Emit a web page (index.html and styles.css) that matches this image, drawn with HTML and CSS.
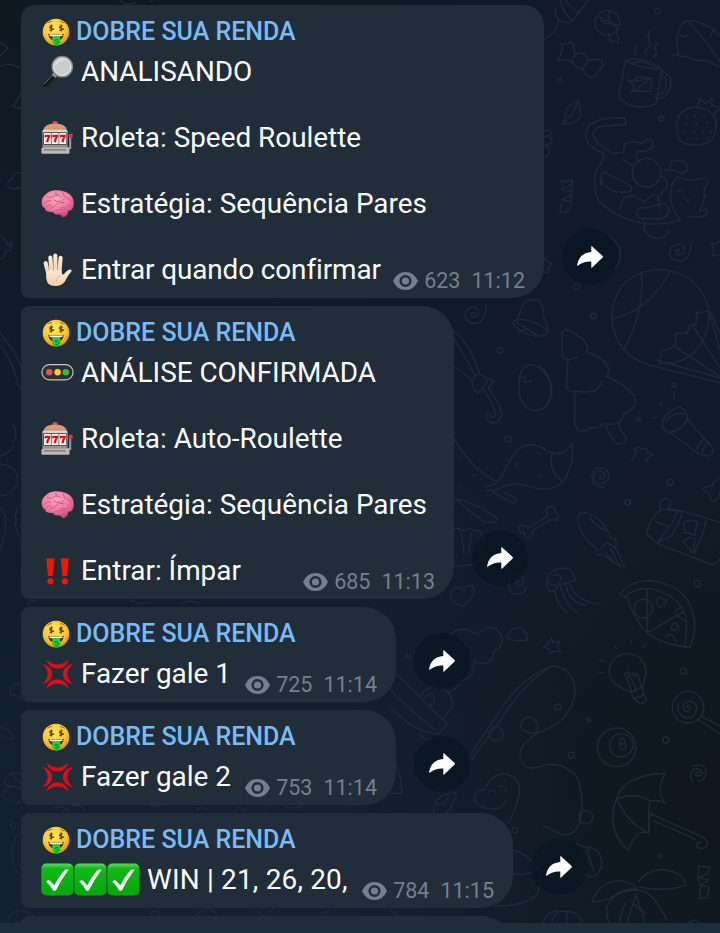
FILE: index.html
```html
<!DOCTYPE html>
<html lang="pt-BR">
<head>
<meta charset="utf-8">
<title>DOBRE SUA RENDA</title>
<link rel="stylesheet" href="styles.css">
</head>
<body>
<svg class="defs" width="0" height="0" aria-hidden="true">
  <defs>
    <radialGradient id="gFace" cx=".45" cy=".35" r=".65"><stop offset="0" stop-color="#ffe95c"/><stop offset=".65" stop-color="#fdc82e"/><stop offset="1" stop-color="#e8930f"/></radialGradient>
    <linearGradient id="gCheck" x2="0" y2="1"><stop offset="0" stop-color="#5be05b"/><stop offset=".16" stop-color="#12b81a"/><stop offset="1" stop-color="#02a808"/></linearGradient>
    <linearGradient id="gMetal" x2="0" y2="1"><stop offset="0" stop-color="#dcdcd6"/><stop offset="1" stop-color="#8c8b87"/></linearGradient>
    <linearGradient id="gDome" x2="0" y2="1"><stop offset="0" stop-color="#e8946a"/><stop offset=".6" stop-color="#dc9a72"/><stop offset="1" stop-color="#a86445"/></linearGradient>
    <radialGradient id="gBrain" cx=".45" cy=".3" r=".7"><stop offset="0" stop-color="#fba6c2"/><stop offset=".6" stop-color="#ee7ba0"/><stop offset="1" stop-color="#c9446f"/></radialGradient>
    <linearGradient id="gHand" x2="0" y2="1"><stop offset="0" stop-color="#fdeada"/><stop offset="1" stop-color="#f2cca4"/></linearGradient>
    <symbol id="money" viewBox="0 0 28 28">
      <circle cx="14" cy="14" r="13.3" fill="url(#gFace)"/>
      <path d="M6.3 15.700q7.700 1.800 15.400 0q-.6 7.300-7.700 7.300T6.300 15.700z" fill="#4b2410"/>
      <path d="M7.400 16.200q6.600 1.200 13.200 0l-.4 1.800q-6.200 1-12.400 0z" fill="#fff"/>
      <path d="M10.200 19q4-1.600 8 0l.4 5.600q-.5 3-4 3t-4.200-3z" fill="#23cf3a"/>
      <path d="M16 21.600q-3-1-3 .5t2.600 1.200 0 2.200l-2.800-.2" fill="none" stroke="#0c7d20" stroke-width=".9"/>
      <g fill="none" stroke="#614016" stroke-width="1.200"><path d="M11 8.300q-3.200-1-3.200.7T10.800 10.800t-3.200 1.500M9.400 6.600v7M20.800 8.300q-3.200-1-3.200.7t3 1.800-3.200 1.500M19.200 6.600v7"/></g>
      <path d="M5.500 5.200q2-2 4.500-1.600M18 3.700q3-.2 4.600 1.900" fill="none" stroke="#a86a12" stroke-width="1"/>
    </symbol>
    <symbol id="lens" viewBox="0 0 33 33">
      <path d="M1.500 29.500L12 18.500l3.600 3.400L5 32q-1.500.9-2.900-.4t-.6-2.100z" fill="#17191b"/>
      <path d="M2.500 29.500L12 19.700" stroke="#6a7076" stroke-width="1"/>
      <path d="M10.700 19.800l3-3.200 3.400 3.300-3 3.200z" fill="#8d9295"/>
      <circle cx="21.300" cy="11.700" r="10.200" fill="#bfc3c6" stroke="#80868a" stroke-width="1.400"/>
      <circle cx="21.300" cy="11.700" r="8.600" fill="#c9cbcd" stroke="#eceeef" stroke-width="1"/>
      <path d="M15 10q2-5 7-4.500" fill="none" stroke="#e4e6e7" stroke-width="1.600"/>
    </symbol>
    <symbol id="slot" viewBox="0 0 33 33">
      <rect x="11.600" y="0" width="5" height="4" rx="1.500" fill="#d2484a"/>
      <path d="M2.500 10q0-7.500 11.600-7.500T25.800 10z" fill="url(#gDome)"/>
      <path d="M26 26h2.200V15.500h2V28H26z" fill="#9b9d9e"/>
      <circle cx="29.700" cy="14.700" r="2.300" fill="#cf3647"/>
      <rect x="1.500" y="8.500" width="25" height="18.500" rx="1.500" fill="url(#gMetal)"/>
      <rect x="2" y="11.300" width="24" height="12.400" rx="1" fill="#3d3936"/>
      <path d="M2.900 12h7v11h-7zM10.600 12h7v11h-7zM18.300 12h7v11h-7z" fill="#fafaf8"/>
      <path d="M3.600 13.800h5.800v1.900q-2 2.300-2 5.500H4.900q.1-2.900 2-5.100H4.700l-.2.700h-.9zM11.300 13.800h5.800v1.900q-2 2.300-2 5.500h-2.500q.1-2.900 2-5.100h-2.200l-.2.700h-.9zM19 13.800h5.800v1.900q-2 2.300-2 5.500h-2.500q.1-2.900 2-5.100h-2.200l-.2.700H19z" fill="#d41418"/>
      <path d="M1.500 26.500h25.500l1.500 1v4.300q0 .9-1 .9H1.300q-.9 0-.9-.9v-3.800z" fill="#b9b9b5"/>
      <path d="M3 28.200h22v1.300H3z" fill="#777671"/>
    </symbol>
    <symbol id="brain" viewBox="0 0 33 33">
      <path d="M1 18Q-.5 12 4 8q4-4.500 10-4.800T25 5q6 2.300 7.500 8.500 1 6-1.500 9-2 1.500-3.700 1.200-.3 4.800-4.300 6.400-2 .4-3.800-2.600Q13 28 12 25q-8 .7-8-3.700Q1.500 21 1 18z" fill="url(#gBrain)"/>
      <path d="M3 17q3-4 7-3.500M6 9q3 3 7 0t7 1M9 21q5-1 7-4t7-1M15 5q-1 3 2 4M22 6q0 4 4 5t4 4M13 13q3 3 6 1M23 12q-3 1-2 4M12 25q6-4 13-2M5 20q2-3 5-2M27 17q1 3-3 4M19 21q3-2 5 0M20 26q4 1 6-1" fill="none" stroke="#cc5680" stroke-width=".9" stroke-linecap="round"/>
    </symbol>
    <symbol id="hand" viewBox="0 0 33 33">
      <g fill="none" stroke="url(#gHand)" stroke-width="4.100" stroke-linecap="round">
        <path d="M4.700 10.200L7.600 22"/><path d="M9.300 4.500L10.700 20"/><path d="M14.300 2.600L14.600 20"/><path d="M19.600 4.900L18.400 20"/>
      </g>
      <path d="M5.500 20L8 16.500h12.400L20.700 20q.3 2 2 1.200l3-3q2.200-2.200 4.300-1.400 1.300.7.200 1.900Q27 22 25 26.500 22.500 32.800 15 33 9.500 33 7 30.500 4.500 26 5.500 20z" fill="url(#gHand)"/>
      <path d="M7.600 14.500l.8 4M12.400 14v4M16.600 14v4M19.500 22.500q-4 2-4.500 6" fill="none" stroke="#d9ac82" stroke-width=".7"/>
    </symbol>
    <symbol id="light" viewBox="0 0 33 33">
      <rect x=".9" y="8.700" width="31.200" height="15.200" rx="7.600" fill="#302e2f" stroke="#c2c5c5" stroke-width="1.200"/>
      <circle cx="8.300" cy="16.300" r="3.200" fill="#e8505a"/><circle cx="16.600" cy="16.300" r="3.200" fill="#f6cf1f"/><circle cx="24.800" cy="16.300" r="3.200" fill="#25c43f"/>
    </symbol>
    <symbol id="bang" viewBox="0 0 33 33">
      <path d="M5.300 4.600h8.200L11.700 22H7zM19.600 4.600h8.200L26.200 22h-4.700z" fill="#f31607"/>
      <circle cx="9.400" cy="27.300" r="3.100" fill="#f31607"/><circle cx="23.800" cy="27.300" r="3.100" fill="#f31607"/>
    </symbol>
    <symbol id="anger" viewBox="0 0 33 33">
      <path d="M6.200 3.500Q11 8 16.500 8T27 3.500q-2.500 7.700-10.500 7.700T6.200 3.500zM6.200 30.500Q11 26 16.500 26T27 30.500q-2.500-7.700-10.500-7.700T6.200 30.500zM2.500 7.500Q10.800 10 10.800 17T2.500 26.500Q7.300 22 7.300 17T2.500 7.500zM30.700 7.500Q22.300 10 22.300 17t8.400 9.500Q25.800 22 25.800 17t4.900-9.500z" fill="#e00c18" stroke="#e00c18" stroke-width=".8" stroke-linejoin="round"/>
    </symbol>
    <symbol id="check" viewBox="0 0 33 33">
      <rect x=".3" y=".5" width="32.200" height="32" rx="5" fill="url(#gCheck)"/>
      <path d="M5.300 18.800q1.700-2.400 4-.8l4 4.600Q18 13 24.300 6.600l3.500-.2Q20 16.500 15 27.200q-1.500 1-3 0-3-5.500-6.700-8.400z" fill="#fff"/>
    </symbol>
    <symbol id="eye" viewBox="0 0 25 18">
      <path fill-rule="evenodd" d="M12.500 0Q21 0 25 9q-4 9-12.500 9T0 9q4-9 12.500-9zM12.500 2.900a6.100 6.100 0 1 0 0 12.200a6.100 6.100 0 1 0 0-12.200zM12.500 5.400a3.600 3.600 0 1 1 0 7.200a3.600 3.600 0 1 1 0-7.200z" fill="currentColor"/>
    </symbol>
    <symbol id="share" viewBox="0 0 26 22">
      <path d="M14.300.7q.1-1 .9-.3L25.600 10q.8.800 0 1.600L15.200 21.500q-.8.600-.9-.3V15.500Q7.500 14.800 1 19.600q-1 .6-.9-.6Q2.200 7 14.300 6z" fill="#fff"/>
    </symbol>
  </defs>
</svg>

<svg class="wallpaper" viewBox="0 0 720 933" aria-hidden="true">
  <g transform="translate(540 0) scale(.3333)">
    <path d="M12 118Q45 102 56 64M48 28Q40 50 62 64q18 8 35 0Q122 30 145 0M62 2q2 28 35 62M78 0q10 25 42 38"/>
    <circle cx="202" cy="68" r="37"/><path d="M175 50q26 10 60 38M210 32q-20 30 25 44M206 102l5 26 10-8 12 8 3-20-8-10M184 62q10 15 26 4"/>
    <path d="M102 163q4-26-7-38l-18 8-13-3q8 25-12 50 26-2 48 6M122 208q-30-15-25-28 8-25 30-20 20 8 14 24-4 20-19 24zM142 182q20-7 43-2 9 20-9 30-4 22-22 24-20-6-24-26"/>
    <circle cx="352" cy="33" r="8"/><circle cx="60" cy="242" r="7"/><circle cx="365" cy="356" r="7"/>
    <path d="M256 182L236 292q40 45 112 20l18-104M256 182q55-18 110 26-60 0-110-26M280 188q30-10 68 14M366 214q32 10 25 46-10 36-41 36M368 226q16 8 10 38-8 20-24 20M260 240l22 4 10-14 44 4-6 40-56 0 10-16zM282 244l50-10-46 36M288 166q-8-8 0-28M318 162q-10-8 8-18 10-8 0-24-6-14 6-28M342 170q14-6 4-20-4-12 10-24"/>
    <path d="M400 168l16-6q-16-60 16-96 18-10 42 0 36 10 66 40M416 168q30 0 50 14l34 0 40 18M440 60q50 50 100 124M420 104q12 12 24 0M510 110l8-16"/>
    <path d="M66 374q10-10 10-36 8-28 40-30 16 50-18 60-14 2-32 6M76 364q28-22 40-68"/>
    <path d="M12 392q26-6 18 14-16 4-18 4 32-4 20 20l-20 8q20-6 14 28l-10 6"/>
    <path d="M64 542q14 4 34-2 2 16-34 28 10 8 32 2 2 20-32 30 10 6 30 2l-2 22-12 12-20 0 2-24M64 542l4 20M98 540l-2 24M96 570l-2 28"/>
    <path d="M418 346q25-34 72-20 46 16 38 60-4 36-32 44-50 14-76-8-18-36-2-76zM474 322l4-26 20 14 18-16 0 22 26 6-20 20"/>
    <path d="M440 350l6 4M460 344l6 6M490 350l6-4M436 374l6-4M466 368l6 6M500 370l6-4M432 396l6 4M460 398l6-4M486 390l6 4M510 398l6-4M440 420l6-4M470 416l6 4M500 416l4-6"/>
    <path d="M250 376q14-10 2-22-70-4-98 18-28 24-8 60 14 16 46 28 4 20-20 44-18 50 2 94 50 60 150 74 60 2 100-14M250 376q-50-2-76 6-26 14-4 44 30 24 48 34l32-2 4-26q24-10 52-2l16-12q20 0 18 20-14 20-48 16l-2 22 12 14M246 478l30 18M184 558q-6-28 6-44l56 30q30 6 28 30-30 6-48 0-20-5-46-32M242 626q0-40 40-38l30 18 24-18q12-10 20 10l4 30M300 624q-14 10-4 30l56 4q36-6 34-28-4-20-24-18l-44 12zM362 528q26 8 18 36-26 20-28 40M396 554q-16 60 26 106M396 554l14-22 40 10 44-8 10 12-12 22 2 20-14 46 18-8q8 12-2 22-24 4-54 4M370 510l32 0q30 20 42-4-2-26-30-24-30 0-24 24M310 660l4 30M408 572q14 4 18-6M450 600q-8 4-16-4"/>
    <circle cx="320" cy="518" r="43"/>
  </g>
  <g transform="translate(540 230) scale(.3333)">
    <path d="M205 18q46 26 34 70-8 30-28 38M312 0q20 30 50 24 20-8 28-24M420 66q-4-12-12-4 0 16 16 12 14-10 6-26-16-12-34 2-14 20-2 36 24 14 44 0 20-20 12-52M540 34l-12 8-14 0 8 16-4 20 22-4"/>
    <path d="M345 410Q214 380 216 250 230 124 362 118q120 10 148 130"/><path d="M304 126q10 120-52 232M214 266q110-20 176-142M502 244l-32 4-2 34-20 4-6 24-34 0-2 36-26 14-16 2-4 40 46-4q100-30 102-156M322 404l218 54M350 390l190 54M400 346l140 94M456 284l84 130M508 248l32 110M516 252l24 60"/>
    <path d="M66 308q10-16 30-2l32 20q20 20 12 40 60 20 66 52 0 20-10 20 70 30 88 64 8 36-32 48-4 18-16 30-28 6-46 0-10 16-40 14-14 14-34 8-12-10-12-40l0-76q-20 0-24-16l4-80q-20-4-18-22zM114 380q-16 10-32 8M188 454q-10 24-32 30-22 4-50 0M196 586q10 30 36 56 24 2 28-18-20-20-24-46"/>
    <circle cx="110" cy="171" r="8"/><circle cx="160" cy="258" r="8"/><circle cx="402" cy="466" r="6"/><circle cx="296" cy="567" r="6"/>
    <path d="M368 578q4-30 50-48 20 10 26 32-20 40-56 46-20-6-20-30zM378 574q20-30 56-20M388 606l90 66q20 10 34 4 10-10 6-22l-76-86M470 658q6-20 26-34M486 668q4-20 20-30M400 486l4 20M358 518l10 8M336 562l14 4M276 690l14-24-10-10 18-4 8 6 14-4 2 14 16 6-16 10-2 10"/>
    <path d="M12 90l6-8 6 14 12 4-10 14 0 14-14-2M0 410q36 30 36 75-8 48-36 54"/>
  </g>
  <g transform="translate(440 300) scale(.3333)">
    <path d="M104 42q-8-10-10 0 0 12 14 8 14-10 4-24-16-12-32 4-10 20 4 34 24 14 42-2 16-20 10-48M218 70q22-18 28-50 14-28 52-18 14 24 14 54 14 16 10 44-10 10-34 8-50-8-70-38zM222 62q40-14 98 26M230 68l60 36M236 94q30-14 48 10"/>
    <path d="M40 92q50 36 78 128l-26 20M40 116q34 50 66 112M118 222l20 14 26 8-20 16q34 50 42 82-6 30-34 26-20-10-14-26 16-2 16 8 14 6 12-14-16-42-36-68M94 240l10 32 10 6 12-8 14-26M40 200q30 14 52 40"/>
    <path d="M244 212q20-26 50-12 40 30 40 74-6 56-50 58-40-4-48-60 0-40 8-60zM238 232l20 0M250 240l6 8 20-6"/>
    <circle cx="181" cy="151" r="9"/><circle cx="205" cy="418" r="9"/><circle cx="461" cy="47" r="8"/><circle cx="562" cy="607" r="8"/>
    <path d="M40 412q50 90 126 132M136 558q30 0 44-20 30-60 46-80 40-46 100-2 50 16 70-26 10 70-32 120-40 30-94 10-50-20-100 10l-34 2M336 460q-12 50 28 82M155 572q40 30 70 38 10-14-12-24l-20-8M46 596q70 16 126 60-2 18-40 8-44-28-84-66M98 526l8 0M54 474l6 0M54 560l10-4M234 488q-10 10 2 14M296 458l6 4M294 530l4-4M196 556l4-4"/>
    <path d="M266 684l56-36q-10-26 10-30 16 0 12 16 18 14 8 26l-22 0-52 32q2 24-14 24-14-6-10-16-20-2-18-18 14-10 30 2zM414 660q0-30 30-20 50 20 68 74l12 0 6 18-6 8 30 60-14 0-56-38-10 4-4-20q-50-36-56-86zM450 654q20 26 46 36M480 748l20-20 24 14M510 744l30 54M494 756l34 36"/>
    <path d="M40 690q14-10 30 2 20-12 32 0 24-4 24 14 14 10 0 30l-18 56-66 8M64 700l8 60M94 700l-8 60M120 710l-18 54M32 884q4-26 32-20l8 8q6-20 26-14 18 24-30 62-34-12-36-36z"/>
    <path d="M240 846q-12-10-14 4 4 14 20 6 12-20-6-32-22-10-34 16-4 30 14 42 36 6 38-20"/>
    <path d="M326 868q-14-28 6-50 36-28 66 0l8 22-28 10q-30 6-38 26zM340 826q28-8 20 20-20 16-32 4M346 872q0 40 36 66M362 862q10 46 50 76M378 856q10 50 60 60M388 852q20 50 86 60"/>
  </g>
  <g transform="translate(560 460) scale(.3333)">
    <path d="M124 48q-10 0-6 8 16 4 16-10-4-16-24-12-16 20 0 34 24 8 36-14 4-28-28-32-24 6-22 36 6 24 38 24"/>
    <path d="M260 222q10-50 44-74l64 6 112 32M260 222l30 28 160 62q20 4 30-16M290 250q20-14 42-20 28-40 36-76M290 250l50-68 14-32M286 184l38 16M302 150l-4-20q10-22 32-10 6 16-8 26M330 146l30 6M372 186q20-10 40 0l-8 40-30-10zM370 246q20-24 34-6l-4 40zM438 182l-8 36-28 60M480 52q-20 10-24 26-30 0-24 14 14 0 24 30 20 6 24-28"/>
    <path d="M180 404q30-44 94-42 120 14 130 128 0 40-14 72-80-6-130-44-40-44-58-104zM194 412q30-30 76-26 100 20 110 100l-4 70M262 388l0 130 110-64M290 420q10-16 20 0l12 0q-2 14-22 22-10-6-10-22zM334 498l10-10 12 10q-8 20-20 12zM316 530q20-16 32 14M368 442q-28 4-18 26l24 14"/>
    <circle cx="250" cy="446" r="28"/><circle cx="330" cy="67" r="9"/><circle cx="204" cy="127" r="8"/><circle cx="410" cy="371" r="9"/>
  </g>
  <g transform="translate(390 600) scale(.3333)">
    <path d="M180 106q30-36 82-2 40-44 72 0 10 36-22 50-4 40-40 36-14 0-20-8 4 60-46 60 4 20-30 34M352 110q10-30 40-26 20 10 20 36-30 6-60-4zM484 114l6 14 20-4-8 16 10 14-20 0-10 8-6-16-16-6 14-8z"/>
    <path d="M240 466l78-116Q390 230 490 198q70 10 64 88-14 76-98 108-50 14-64-14 0-28 30-28 32 16 18 48-54 36-50 70 10 46 60 30 60-24 110 30 20 40 14 110-10 80-68 60-20-14-46-22M248 474l84-114q60-100 150-160M240 466q-4 10 8 12M568 638q20-14 38 4 8 28-20 30-20-4-18-34z"/>
    <circle cx="318" cy="402" r="21"/><circle cx="504" cy="321" r="9"/><circle cx="544" cy="466" r="9"/><circle cx="828" cy="420" r="9"/><circle cx="880" cy="214" r="9"/><circle cx="374" cy="690" r="8"/><circle cx="596" cy="359" r="6"/><circle cx="810" cy="767" r="6"/><circle cx="55" cy="168" r="7"/>
    <path d="M724 276q-70-20-66-70 10-44 60-46 50 10 50 60-10 30-10 60 14 10 10 24l-18 8-22-20zM724 276l30-14M732 296l34-12M704 220l10-4 26 56M704 220l20 50M714 232l14-16 6 14 8-10 14 46M724 122l0 8M674 138l6 8M768 130l-8 12M630 180l12 4M626 218l14 0"/>
    <circle cx="894" cy="322" r="47"/><path d="M892 322q0-10 8-4 4 20-14 16-14-14 2-28 24-8 32 16-2 34-32 32-32-14-22-46M936 350l54 28M926 360l64 42"/>
    <circle cx="680" cy="442" r="58"/><circle cx="694" cy="436" r="35"/><circle cx="697" cy="424" r="8"/><circle cx="699" cy="440" r="9"/>
    <path d="M928 518q-10-4-12 6 12 10 22-4-8-20-26-12-18 20-4 36M908 500q30-14 40 10 4 26-22 34"/>
    <path d="M680 596q20-70 146-76-30 50 0 90-10-10-46-8l-4 36 0 60q-40-10-62 54-70-70-34-156zM680 596q60-20 100 6M680 596q30 70 96 104M776 654q20-20 6-12l158 70q20 14 8 30-20 8-30-4 0-14 14-10M786 660l130 58"/>
    <path d="M606 906q20-60 80-64 40 4 54 24-40 0-66 20-30 20-68 20zM746 844q30-40 80-34 60 10 60 46-60 20-136 6M740 870q-70 0-90 54 0 30 8 44M740 870q50 0 90 90M740 880l-30 88M740 890l24 78M726 910l40 30M686 968l20-60"/>
    <path d="M926 798l34 4-8 20-24 10 28 8-26 16 28 4-6 34-24 0 4-30-8-30z"/>
    <path d="M254 604q-4-36 30-34 20-50 60-48 50 10 44 60-10 50-34 88M254 604q30 34 80 18 10-10 12-20M296 576q14-14 20 0M326 560q20-6 24 16M130 640q0-60 68-62 0 30-30 62M136 610q20 14 40-20"/>
    <path d="M18 220q50 50 154 152l-26 30q-80-6-146-84M0 270q60 60 136 120M90 290q20-36 60-30 40 20 38 60l-26 36M108 290q20-20 26 6-2 20-18 20M92 402q10 24 44 16M0 580l36 0q0-40-20-90"/>
    <path d="M580 740q60 0 54 60-20 50-54 20M560 730l40 20M590 750l20 60M368 750q100 30 76 130-30 36-130 40M460 968q10-40 60-34 50 0 56 34M486 968q0-20 20-30M530 968l0-34M372 820q40 10 60-10M0 930l24 20M896 968q20-16 30 0"/>
  </g>
  <g class="fine">
    <path d="M0 42l8 6-8 8M0 66q10-4 21 2M21 94l-8 12 8 3M120 0q6 8 16 2M150 2l6-4M21 174q-8-4-8 4-8 4-4 10 6 2 12-1M0 236q6 2 8 10l4-4-1 8-5 1q-2 8-6 8M0 345q12 14 18 40l3 4M0 333q14 16 21 34M0 464q18 2 18 18-6 14-18 14M0 508q12 10 0 42M21 505q-6 2-4 7-4 4 0 8-4 6 0 9 0 6 4 8M13 424q6 10 0 18M0 456q8-2 14-10M21 684l-6 0q-6 4-5 11l6 0 5 5M0 727q10 2 14 10-2 6-14-2M21 774q-14-4-16 8 0 6 6 4-10 6-6 12 8 6 16 4M6 785l15 3M10 772l11 12M20 832q-10 10-8 24 2 14 9 20M8 922q0-14 20-10l10 8M50 810q10-8 20 2M62 812q16-12 24-2M150 805q8 4 16-2M196 812q4-8 12-2M234 812q4-10 12 0l0-6M266 812v-7M284 806q10 4 18 0M150 915q4-8 10 0M196 916q8-12 22-2M256 910l8 6 10-8M320 914l10-4M28 605q2-6 8-4M130 600q12 6 20 2M180 604q10-6 20 0"/>
    <circle cx="13" cy="826" r="2.500"/>
  </g>
</svg>

<main class="chat">
  <article class="row">
    <section class="bubble bubble--a">
      <h2 class="name"><svg class="face"><use href="#money"/></svg>DOBRE SUA RENDA</h2>
      <p class="line"><svg class="emoji"><use href="#lens"/></svg><span class="text">ANALISANDO</span></p>
      <p class="line"></p>
      <p class="line"><svg class="emoji"><use href="#slot"/></svg><span class="text">Roleta: Speed Roulette</span></p>
      <p class="line"></p>
      <p class="line"><svg class="emoji"><use href="#brain"/></svg><span class="text">Estratégia: Sequência Pares</span></p>
      <p class="line"></p>
      <div class="line"><svg class="emoji"><use href="#hand"/></svg><span class="text text--snug">Entrar quando confirmar</span><span class="meta"><svg class="eye"><use href="#eye"/></svg><span>623</span><time>11:12</time></span></div>
    </section>
    <button class="share" aria-label="Encaminhar"><svg><use href="#share"/></svg></button>
  </article>
  <article class="row">
    <section class="bubble bubble--b">
      <h2 class="name"><svg class="face"><use href="#money"/></svg>DOBRE SUA RENDA</h2>
      <p class="line"><svg class="emoji"><use href="#light"/></svg><span class="text">ANÁLISE CONFIRMADA</span></p>
      <p class="line"></p>
      <p class="line"><svg class="emoji"><use href="#slot"/></svg><span class="text">Roleta: Auto-Roulette</span></p>
      <p class="line"></p>
      <p class="line"><svg class="emoji"><use href="#brain"/></svg><span class="text">Estratégia: Sequência Pares</span></p>
      <p class="line"></p>
      <div class="line"><svg class="emoji"><use href="#bang"/></svg><span class="text">Entrar: Ímpar</span><span class="meta"><svg class="eye"><use href="#eye"/></svg><span>685</span><time>11:13</time></span></div>
    </section>
    <button class="share" aria-label="Encaminhar"><svg><use href="#share"/></svg></button>
  </article>
  <article class="row">
    <section class="bubble bubble--c">
      <h2 class="name"><svg class="face"><use href="#money"/></svg>DOBRE SUA RENDA</h2>
      <div class="line"><svg class="emoji"><use href="#anger"/></svg><span class="text">Fazer gale 1</span><span class="meta"><svg class="eye"><use href="#eye"/></svg><span>725</span><time>11:14</time></span></div>
    </section>
    <button class="share" aria-label="Encaminhar"><svg><use href="#share"/></svg></button>
  </article>
  <article class="row">
    <section class="bubble bubble--c">
      <h2 class="name"><svg class="face"><use href="#money"/></svg>DOBRE SUA RENDA</h2>
      <div class="line"><svg class="emoji"><use href="#anger"/></svg><span class="text">Fazer gale 2</span><span class="meta"><svg class="eye"><use href="#eye"/></svg><span>753</span><time>11:14</time></span></div>
    </section>
    <button class="share" aria-label="Encaminhar"><svg><use href="#share"/></svg></button>
  </article>
  <article class="row">
    <section class="bubble bubble--d">
      <h2 class="name"><svg class="face"><use href="#money"/></svg>DOBRE SUA RENDA</h2>
      <div class="line"><svg class="emoji"><use href="#check"/></svg><svg class="emoji"><use href="#check"/></svg><svg class="emoji"><use href="#check"/></svg><span class="text text--wide">WIN | 21, 26, 20,</span><span class="meta"><svg class="eye"><use href="#eye"/></svg><span>784</span><time>11:15</time></span></div>
    </section>
    <button class="share" aria-label="Encaminhar"><svg><use href="#share"/></svg></button>
  </article>
  <div class="bubble bubble--next"></div>
</main>
<footer class="bar"></footer>
</body>
</html>
```
FILE: styles.css
```css
* { box-sizing: border-box; }

body {
  margin: 0;
  width: 720px;
  height: 933px;
  overflow: hidden;
  display: flex;
  flex-direction: column;
  font-family: Roboto, "Liberation Sans", sans-serif;
  background:
    radial-gradient(ellipse 420px 420px at 640px 130px, #111a29 0%, rgba(17, 26, 41, 0) 100%),
    radial-gradient(ellipse 380px 420px at 720px 800px, #0e151c 0%, rgba(14, 21, 28, 0) 100%),
    linear-gradient(180deg, #0f1922 0%, #101c28 45%, #142230 100%);
}

.defs { position: absolute; }

.wallpaper {
  position: absolute;
  left: 0;
  top: 0;
  width: 720px;
  height: 933px;
  fill: none;
  stroke: #1e2a36;
  stroke-width: 4.2;
  stroke-linecap: round;
  stroke-linejoin: round;
}
.wallpaper .fine { stroke-width: 1.4; }

.chat {
  position: relative;
  flex: 1;
  min-height: 0;
  overflow: hidden;
  padding: 5px 0 0 21px;
  display: flex;
  flex-direction: column;
  gap: 8px;
}

.row {
  display: flex;
  align-items: flex-end;
  flex: none;
}

.bubble {
  flex: none;
  padding: 13px 19px 12px 20px;
  border-radius: 8px 32px 32px 8px;
  background: #212d38;
}
.bubble--a { width: 523px; border-radius: 14px 20px 32px 8px; }
.bubble--b { width: 433px; }
.bubble--c { width: 375px; }
.bubble--d { width: 492px; }
.bubble--next { width: 492px; height: 95px; }

.name {
  display: flex;
  align-items: center;
  gap: 6px;
  height: 37px;
  margin: 0;
  padding: 0 0 10px 1px;
  font-size: 25px;
  font-weight: 500;
  line-height: 27px;
  color: #78bcf7;
  white-space: nowrap;
}
.face { width: 28px; height: 28px; flex: none; }

.line {
  display: flex;
  align-items: center;
  height: 33px;
  margin: 0;
  font-size: 27.9px;
  line-height: 33px;
  color: #fafcfd;
  white-space: nowrap;
}
.emoji { width: 33px; height: 33px; flex: none; }
.text { margin-left: 7px; }
.text--snug { letter-spacing: -0.1px; }
.text--wide { letter-spacing: 0.2px; }

.meta {
  display: flex;
  align-items: center;
  align-self: flex-end;
  margin: 0 0 -8px auto;
  height: 26px;
  font-size: 21.5px;
  line-height: 26px;
  color: #74818d;
}
.eye { width: 25px; height: 18px; margin: 0 6px 0 0; }
.meta time { margin-left: 11px; }

.share {
  display: flex;
  align-items: center;
  justify-content: center;
  width: 56px;
  height: 56px;
  margin: 0 0 13px 18px;
  padding: 0;
  border: 0;
  border-radius: 50%;
  background: rgba(8, 20, 34, 0.68);
}
.share svg { width: 26px; height: 22px; }

.bar {
  position: relative;
  flex: none;
  height: 10px;
  background: #1f2c3a;
}
```
